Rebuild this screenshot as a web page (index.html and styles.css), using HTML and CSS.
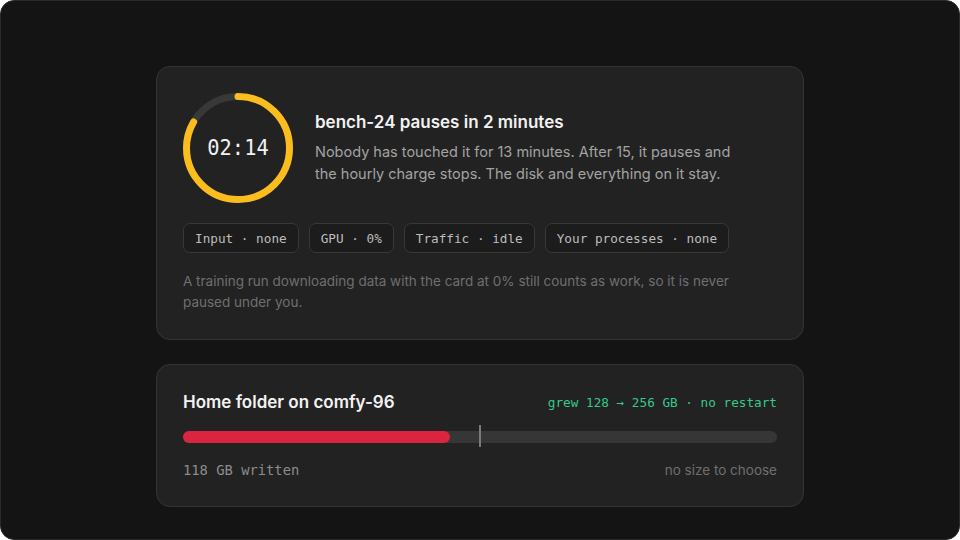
FILE: index.html
```html
<!DOCTYPE html>
<html>

<head>
    <link rel="stylesheet" href="styles.css">
</head>

<body>
  <div class="frame">

    <div class="card idle">
      <div class="idle-top">
        <div class="ring">
          <svg width="110" height="110" viewBox="0 0 110 110">
            <circle class="ring-track" cx="55" cy="55" r="51.5"></circle>
            <circle class="ring-fill" cx="55" cy="55" r="51.5"
              stroke-dasharray="269.6 323.6" transform="rotate(-90 55 55)"></circle>
          </svg>
          <span class="ring-time">02:14</span>
        </div>
        <div class="idle-text">
          <h2>bench-24 pauses in 2 minutes</h2>
          <p>Nobody has touched it for 13 minutes. After 15, it pauses and the hourly charge stops. The disk and everything on it stay.</p>
        </div>
      </div>

      <div class="chips">
        <span class="chip">Input · none</span>
        <span class="chip">GPU · 0%</span>
        <span class="chip">Traffic · idle</span>
        <span class="chip">Your processes · none</span>
      </div>

      <p class="note">A training run downloading data with the card at 0% still counts as work, so it is never paused under you.</p>
    </div>

    <div class="card disk">
      <div class="disk-head">
        <h2>Home folder on comfy-96</h2>
        <span class="grew">grew 128 → 256 GB · no restart</span>
      </div>
      <div class="bar">
        <div class="bar-fill" style="width:45%"></div>
        <div class="bar-mark" style="left:50%"></div>
      </div>
      <div class="disk-foot">
        <span class="written">118 GB written</span>
        <span class="nosize">no size to choose</span>
      </div>
    </div>

  </div>
</body>
</html>
```

FILE: styles.css
```css
body {
  margin: 0;
  background-color: #ffffff;
  font-family: 'Inter', 'Noto Sans', sans-serif;
}

.frame {
  box-sizing: border-box;
  width: 960px;
  height: 540px;
  padding-top: 65px;
  background-color: #141414;
  border: 1px solid #2a2a2a;
  border-radius: 14px;
  display: flex;
  flex-direction: column;
  align-items: center;
  gap: 24px;
}

.card {
  box-sizing: border-box;
  width: 648px;
  background-color: #222222;
  border: 1px solid #343434;
  border-radius: 14px;
  padding: 26px;
}

h2 {
  margin: 0;
  font-size: 17px;
  line-height: 22px;
  font-weight: 600;
  color: #f2f2f2;
}

/* idle card */
.idle-top {
  display: flex;
  align-items: center;
  gap: 22px;
}

.ring {
  position: relative;
  width: 110px;
  height: 110px;
  flex-shrink: 0;
}

.ring svg {
  display: block;
}

.ring-track,
.ring-fill {
  fill: none;
  stroke-width: 7;
}

.ring-track {
  stroke: #383838;
}

.ring-fill {
  stroke: #fbbc1e;
  stroke-linecap: round;
}

.ring-time {
  position: absolute;
  inset: 0;
  display: flex;
  align-items: center;
  justify-content: center;
  font-family: 'DejaVu Sans Mono', monospace;
  font-size: 20.4px;
  color: #f2f2f2;
}

.idle-text p {
  margin: 8px 0 0;
  font-size: 14.5px;
  line-height: 22px;
  color: #a3a3a3;
  max-width: 430px;
}

.chips {
  display: flex;
  gap: 10px;
  margin-top: 20px;
}

.chip {
  height: 30px;
  box-sizing: border-box;
  display: inline-flex;
  align-items: center;
  padding: 0 11px;
  border: 1px solid #383838;
  border-radius: 7px;
  background-color: #1c1c1c;
  font-family: 'DejaVu Sans Mono', monospace;
  font-size: 12.7px;
  color: #bdbdbd;
}

.note {
  margin: 18px 0 0;
  font-size: 13.5px;
  line-height: 21px;
  color: #6f6f6f;
}

/* disk card */
.disk-head {
  display: flex;
  justify-content: space-between;
  align-items: center;
}

.grew {
  font-family: 'DejaVu Sans Mono', monospace;
  font-size: 12.7px;
  color: #35c98b;
}

.bar {
  position: relative;
  height: 12px;
  margin-top: 18px;
  border-radius: 6px;
  background-color: #363636;
}

.bar-fill {
  height: 100%;
  border-radius: 6px;
  background-color: #d9253f;
}

.bar-mark {
  position: absolute;
  top: -6px;
  width: 2px;
  height: 22px;
  margin-left: -1px;
  background-color: #7a7a7a;
}

.disk-foot {
  display: flex;
  justify-content: space-between;
  align-items: center;
  margin-top: 17px;
  line-height: 20px;
}

.written {
  font-family: 'DejaVu Sans Mono', monospace;
  font-size: 13.8px;
  color: #8c8c8c;
}

.nosize {
  font-size: 13.5px;
  color: #6f6f6f;
}
```
